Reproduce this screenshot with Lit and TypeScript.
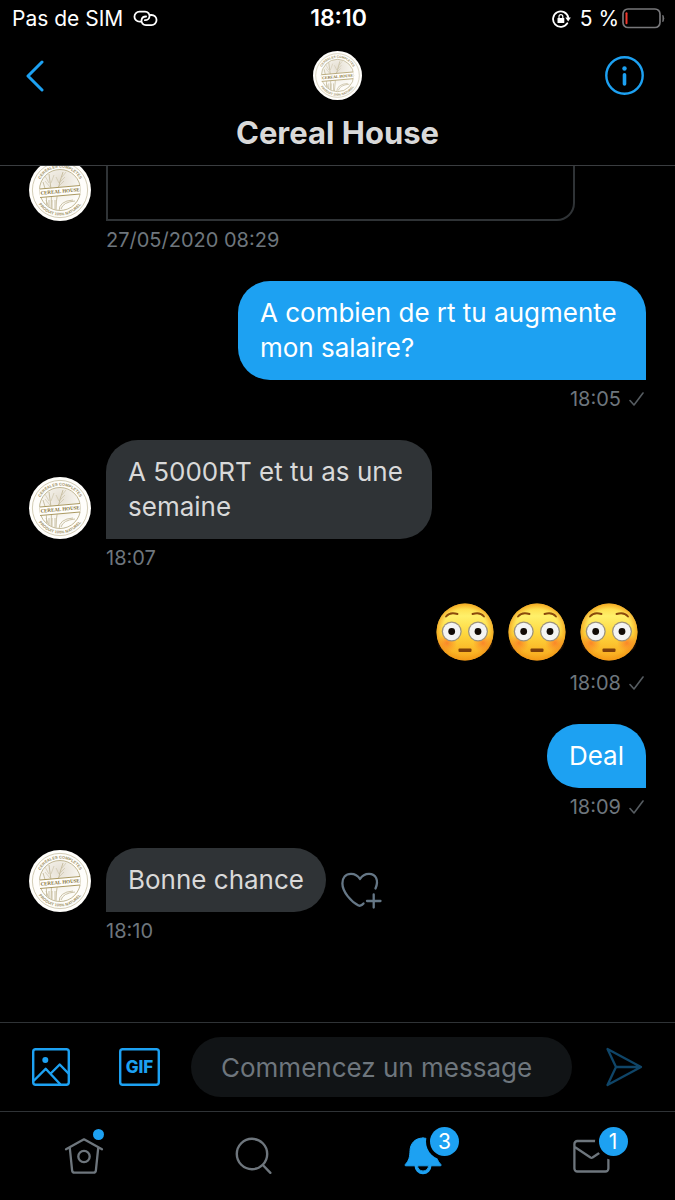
import { LitElement, html, svg, css, nothing } from "lit";
import { customElement, property } from "lit/decorators.js";

type Message = {
  kind: "card" | "in" | "out" | "emoji";
  text?: string;
  count?: number;
  time: string;
  react?: boolean;
};

const MESSAGES: Message[] = [
  { kind: "card", time: "27/05/2020 08:29" },
  { kind: "out", text: "A combien de rt tu augmente \nmon salaire?", time: "18:05" },
  { kind: "in", text: "A 5000RT et tu as une \nsemaine", time: "18:07" },
  { kind: "emoji", count: 3, time: "18:08" },
  { kind: "out", text: "Deal", time: "18:09" },
  { kind: "in", text: "Bonne chance", time: "18:10", react: true },
];

@customElement("brand-avatar")
export class BrandAvatar extends LitElement {
  static styles = css`
    :host { display: block; flex: none; width: 62px; height: 62px; }
    svg { display: block; width: 100%; height: 100%; }
    .ring { fill: #9c8f63; font: 700 4px "Liberation Sans", sans-serif; }
    .name { fill: #7d6a2c; font: 700 5px "Liberation Serif", serif; }
  `;
  render() {
    return html`<svg viewBox="0 0 62 62" role="img" aria-label="Cereal House">
      <defs>
        <path id="top" d="M8.500 31a22.500 22.500 0 0 1 45 0" />
        <path id="bottom" d="M5.500 31a25.500 25.500 0 0 0 51 0" />
        <clipPath id="disc"><circle cx="31" cy="31" r="20" /></clipPath>
        <radialGradient id="glow" cx=".5" cy=".25" r=".6">
          <stop offset="0" stop-color="#e6e0d4" /><stop offset="1" stop-color="#fdfcf8" />
        </radialGradient>
      </defs>
      <circle cx="31" cy="31" r="31" fill="#fffefb" />
      <circle cx="31" cy="31" r="27.6" fill="none" stroke="#b5ab86" stroke-width=".6" />
      <circle cx="31" cy="31" r="20.5" fill="url(#glow)" stroke="#a89b6c" stroke-width=".7" />
      <g clip-path="url(#disc)" fill="none" stroke="#c4ba9b" stroke-width=".9">
        <path d="M22 52Q24 34 20 15M27 52Q27 32 34 13M17 50Q19 36 14 23" />
        <path d="M20 24l-4-7M21 28l-5-6M22 24l3-8M30 24l-3-6M30 24l6-6M29 28l6-6M33 18l4-5" opacity=".6" />
        <path d="M20 41v10M23 41v11M26 41v11M30 52q0-10 14-11M32 50q2-7 14-8M35 51q8 1 13-9M17 41l3 8" />
      </g>
      <path d="M10.500 30L51.500 26v9L10.500 39z" fill="#fffefb" />
      <path d="M11 30l40-3.500M11 38.500l40-3.500" stroke="#a08d50" stroke-width=".9" />
      <text class="name" x="31" y="34" text-anchor="middle" transform="rotate(-5 31 31)">CEREAL HOUSE</text>
      <text class="ring"><textPath href="#top" startOffset="50%" text-anchor="middle">CEREALES COMPLETES</textPath></text>
      <text class="ring"><textPath href="#bottom" startOffset="50%" text-anchor="middle">PRODUIT 100% NATUREL</textPath></text>
    </svg>`;
  }
}

@customElement("flushed-face")
export class FlushedFace extends LitElement {
  static styles = css`
    :host { display: block; width: 58px; height: 58px; }
    svg { display: block; width: 100%; height: 100%; }
  `;
  render() {
    const eye = (x: number) => svg`
      <circle cx=${x} cy="28.500" r="10" fill="#9c927c" />
      <circle cx=${x} cy="28.500" r="8.700" fill="#f4f4f2" />
      <circle cx=${x} cy="28.500" r="3.400" fill="#120b05" />`;
    return html`<svg viewBox="0 0 58 58" role="img" aria-label="😳">
      <defs>
        <linearGradient id="skin" x1="0" y1="0" x2="0" y2="1">
          <stop offset="0" stop-color="#fed43c" /><stop offset=".22" stop-color="#fff06a" />
          <stop offset=".55" stop-color="#fed53c" /><stop offset="1" stop-color="#f8a41a" />
        </linearGradient>
        <radialGradient id="rim">
          <stop offset=".8" stop-color="#f29a16" stop-opacity="0" /><stop offset="1" stop-color="#ee9114" stop-opacity=".65" />
        </radialGradient>
        <radialGradient id="blush">
          <stop offset="0" stop-color="#fa6a24" stop-opacity=".7" /><stop offset="1" stop-color="#fa7a24" stop-opacity="0" />
        </radialGradient>
      </defs>
      <circle cx="29" cy="29" r="28.500" fill="url(#skin)" />
      <circle cx="29" cy="29" r="28.500" fill="url(#rim)" />
      <circle cx="11" cy="40" r="10" fill="url(#blush)" />
      <circle cx="47" cy="40" r="10" fill="url(#blush)" />
      ${eye(15.7)}${eye(42)}
      <path d="M10 13.500Q14 8.500 21.500 11M48 13.500Q44 8.500 36.500 11" fill="none" stroke="#8a4a0c" stroke-width="1.900" stroke-linecap="round" />
      <rect x="22.500" y="45.500" width="13" height="3.400" rx="1" fill="#7d3f0b" />
    </svg>`;
  }
}

@customElement("chat-message")
export class ChatMessage extends LitElement {
  @property({ attribute: false }) message!: Message;

  static styles = css`
    :host { display: block; flex: none; }
    .row { display: flex; align-items: flex-end; gap: 15px; }
    .row.own { justify-content: flex-end; }
    .bubble {
      box-sizing: border-box;
      max-width: 76%;
      padding: 14px 22px 15px;
      border-radius: 32px 32px 32px 0;
      background: #2f3336;
      color: #d9d9d9;
      font-size: 26px;
      line-height: 35px;
      white-space: pre-wrap;
    }
    .own .bubble { border-radius: 32px 32px 0 32px; background: #1da1f2; color: #fff; }
    .card {
      box-sizing: border-box;
      flex: none;
      width: 76%;
      height: 120px;
      border: 2px solid #2f3336;
      border-radius: 18px 18px 18px 0;
    }
    .faces { display: flex; gap: 14px; padding: 4px 8px 3px; }
    .meta {
      display: flex;
      align-items: center;
      gap: 8px;
      padding: 8px 0 0 77px;
      color: #6e767d;
      font-size: 20px;
      line-height: 22px;
    }
    .meta.own { justify-content: flex-end; padding: 8px 2px 0 0; }
    .react { display: block; padding: 0; margin-bottom: 2px; border: 0; background: none; color: #657786; }
    svg { display: block; fill: none; stroke: currentColor; stroke-linecap: round; stroke-linejoin: round; }
    .tick { color: #565c61; }
  `;

  private body(m: Message) {
    if (m.kind === "card") return html`<div class="card"></div>`;
    if (m.kind === "emoji")
      return html`<div class="faces">${Array.from({ length: m.count ?? 1 }, () => html`<flushed-face></flushed-face>`)}</div>`;
    return html`<div class="bubble">${m.text}</div>`;
  }

  render() {
    const m = this.message;
    const own = m.kind === "out" || m.kind === "emoji";
    return html`
      <div class="row ${own ? "own" : ""}">
        ${own ? nothing : html`<brand-avatar></brand-avatar>`}
        ${this.body(m)}
        ${m.react
          ? html`<button class="react" aria-label="Ajouter une réaction">
              <svg width="42" height="40" viewBox="0 0 42 40" stroke-width="2.300">
                <path d="M34.500 18.500C38 10.500 35 3.800 28 3.800c-4 0-7 2-9 5.200C17 5.800 14 3.800 10 3.800 4.500 3.800 1.400 8 1.400 13.500 1.400 22 10.500 32 17.500 35.500q2.500 1 5-2" />
                <path d="M32.700 24.500v13M26 31h13.500" />
              </svg>
            </button>`
          : nothing}
      </div>
      <div class="meta ${own ? "own" : ""}">
        <time>${m.time}</time>
        ${own
          ? html`<svg class="tick" width="15" height="16" viewBox="0 0 15 16" stroke-width="1.600" role="img" aria-label="Envoyé"><path d="M1 9.500L5 14 14 2" /></svg>`
          : nothing}
      </div>`;
  }
}

@customElement("app-root")
export class AppRoot extends LitElement {
  static styles = css`
    :host {
      display: flex;
      flex-direction: column;
      height: 100vh;
      overflow: hidden;
      background: #000;
      color: #d9d9d9;
      font-family: Inter, "Liberation Sans", sans-serif;
    }
    button { display: block; padding: 0; border: 0; background: none; font: inherit; color: #1da1f2; }
    svg { display: block; fill: none; stroke: currentColor; stroke-linecap: round; stroke-linejoin: round; }
    .status {
      display: grid;
      grid-template-columns: 1fr auto 1fr;
      align-items: start;
      flex: none;
      height: 38px;
      padding: 0 10px 0 12px;
      color: #fff;
      font-size: 21px;
      line-height: 37px;
    }
    .carrier, .power { display: flex; align-items: center; gap: 10px; height: 37px; }
    .power { justify-content: flex-end; gap: 9px; }
    .level { display: flex; align-items: center; gap: 3px; }
    .clock { font-size: 23px; font-weight: 600; }
    .header {
      display: grid;
      grid-template-columns: 44px 1fr 39px;
      align-items: center;
      justify-items: center;
      row-gap: 13px;
      flex: none;
      padding: 13px 31px 12px 26px;
      border-bottom: 1px solid #3a3d40;
    }
    .back { justify-self: start; }
    .small { width: 49px; height: 49px; }
    .title { grid-column: 2; margin: 0; font-size: 31px; line-height: 40px; font-weight: 700; }
    .chat {
      display: flex;
      flex-direction: column;
      justify-content: flex-end;
      gap: 30px;
      flex: 1;
      min-height: 0;
      overflow: hidden;
      padding: 0 29px 80px;
    }
    .composer {
      display: flex;
      align-items: center;
      flex: none;
      gap: 31px;
      padding: 14px 32px;
      border-top: 1px solid #2f3336;
    }
    .tools { display: flex; gap: 49px; }
    .field {
      box-sizing: border-box;
      flex: 1;
      min-width: 0;
      height: 60px;
      padding: 0 30px;
      border: 0;
      border-radius: 30px;
      outline: 0;
      background: #111416;
      color: #d9d9d9;
      font: 26px Inter, "Liberation Sans", sans-serif;
    }
    .field::placeholder { color: #6e767d; opacity: 1; }
    .gif { fill: currentColor; stroke: none; font: 800 17px Inter, sans-serif; }
    .send { color: #0f4568; }
    .nav {
      display: grid;
      grid-template-columns: repeat(4, 1fr);
      align-items: center;
      justify-items: center;
      flex: none;
      height: 88px;
      border-top: 1px solid #2f3336;
    }
    .tab { position: relative; color: #6e767d; text-decoration: none; }
    .tab.active { color: #1da1f2; }
    .badge {
      position: absolute;
      left: 28px;
      top: -9px;
      width: 29px;
      border-radius: 50%;
      background: #1da1f2;
      box-shadow: 0 0 0 4px #000;
      color: #fff;
      font-size: 21px;
      line-height: 29px;
      text-align: center;
    }
    .dot { position: absolute; left: 29px; top: -7px; width: 11px; height: 11px; border-radius: 50%; background: #1da1f2; }
  `;

  render() {
    return html`
      <div class="status">
        <div class="carrier">
          <span>Pas de SIM</span>
          <svg width="26" height="17" viewBox="0 0 26 17" stroke-width="1.800">
            <path d="M7.500 11.700H6.500a5 5 0 0 1 0-10.100h5.500c3 0 4.800 2.300 4.500 4.900-.3 2.400-2.200 3.700-4.600 3.700" />
            <path d="M17.500 5h1a5 5 0 0 1 0 10.100H13c-3 0-4.800-2.300-4.500-4.900.3-2.400 2.200-3.700 4.600-3.700" />
          </svg>
        </div>
        <time class="clock">18:10</time>
        <div class="power">
          <svg width="19" height="18" viewBox="0 0 19 18" stroke-width="1.800">
            <path d="M15.300 13.200A7.700 7.700 0 1 1 16.300 7.500" />
            <path d="M13.300 7.500h5.500l-2.600 4z" fill="currentColor" stroke="none" />
            <rect x="5.500" y="8" width="6.800" height="5" rx=".6" fill="currentColor" stroke="none" />
            <path d="M7 8V6.500a1.900 1.900 0 0 1 3.800 0V8" stroke-width="1.200" />
          </svg>
          <div class="level">
            <span>5 %</span>
            <svg width="43" height="21" viewBox="0 0 43 21">
              <rect x="1" y="1" width="37" height="18.500" rx="5" stroke="#77777a" stroke-width="1.700" />
              <path d="M4.500 5.200v10" stroke="#f0382e" stroke-width="2" />
              <path d="M41 7.500q2 3 0 6z" fill="#77777a" stroke="#77777a" stroke-width=".8" />
            </svg>
          </div>
        </div>
      </div>
      <header class="header">
        <button class="back" aria-label="Retour">
          <svg width="19" height="32" viewBox="0 0 19 32" stroke-width="3"><path d="M16 2L2 16l14 14" /></svg>
        </button>
        <brand-avatar class="small"></brand-avatar>
        <button aria-label="Informations">
          <svg width="39" height="39" viewBox="0 0 39 39">
            <circle cx="19.500" cy="19.500" r="18.200" stroke-width="2.400" />
            <circle cx="19.500" cy="12.500" r="2.200" fill="currentColor" stroke="none" />
            <path d="M19.500 18.800v9.200" stroke-width="3.600" />
          </svg>
        </button>
        <h1 class="title">Cereal House</h1>
      </header>
      <main class="chat">${MESSAGES.map((m) => html`<chat-message .message=${m}></chat-message>`)}</main>
      <form class="composer">
        <div class="tools">
          <button type="button" aria-label="Ajouter une photo">
            <svg width="38" height="38" viewBox="0 0 38 38" stroke-width="2.400">
              <rect x="1.200" y="1.200" width="35.600" height="35.600" rx="2.500" />
              <circle cx="13.300" cy="12" r="3" fill="currentColor" stroke="none" />
              <path d="M2 32.500l11.700-11.700L28 36M18.700 25.500l9-9L36.500 25.500" />
            </svg>
          </button>
          <button type="button" aria-label="Ajouter un GIF">
            <svg width="41" height="38" viewBox="0 0 41 38" stroke-width="2.400">
              <rect x="1.200" y="1.200" width="38.600" height="35.600" rx="2.500" />
              <text class="gif" x="20.500" y="25" text-anchor="middle">GIF</text>
            </svg>
          </button>
        </div>
        <input class="field" type="text" aria-label="Message" placeholder="Commencez un message" />
        <button class="send" type="button" aria-label="Envoyer">
          <svg width="40" height="40" viewBox="0 0 40 40" stroke-width="2.300">
            <path d="M4.500 2L38 20 4.500 38 13 20zM13 20h25" />
          </svg>
        </button>
      </form>
      <nav class="nav">
        <a class="tab" href="#home" aria-label="Accueil">
          <svg width="40" height="40" viewBox="0 0 40 40" stroke-width="2.300">
            <path d="M2 13.300L20 3.300l18 10M5.800 12l2.300 22.300q.2 2.400 2.500 2.400h18.800q2.300 0 2.500-2.400L34.200 12" />
            <circle cx="20" cy="20.500" r="5.700" />
          </svg>
          <span class="dot"></span>
        </a>
        <a class="tab" href="#search" aria-label="Recherche">
          <svg width="40" height="40" viewBox="0 0 40 40" stroke-width="2.400">
            <circle cx="19" cy="18" r="15.200" /><path d="M29.800 29l7.600 7.800" />
          </svg>
        </a>
        <a class="tab active" href="#notifications" aria-label="Notifications">
          <svg width="40" height="40" viewBox="0 0 40 40" stroke="none">
            <path d="M21 2C12 2 8.300 8.500 8 14.500 7.800 21 7 24.500 3.300 28.400q-.8 1.400.5 1.400h34.500q1.400 0 .5-1.400C35 24.500 34 20 33.500 14.500 33 8 29 2 21 2z" fill="currentColor" />
            <path d="M14 29.500a7 7.200 0 0 0 14 0" fill="none" stroke="currentColor" stroke-width="3" />
            <path d="M15.500 29.800h11a5.500 5.200 0 0 1-11 0z" fill="#000" />
          </svg>
          <span class="badge">3</span>
        </a>
        <a class="tab" href="#messages" aria-label="Messages">
          <svg width="40" height="40" viewBox="0 0 40 40" stroke-width="2.300">
            <rect x="3.400" y="5" width="34" height="30.500" rx="3" />
            <path d="M4.500 11.500l15 10q1 .6 2 0L36.500 11.500" />
          </svg>
          <span class="badge">1</span>
        </a>
      </nav>
    `;
  }
}
